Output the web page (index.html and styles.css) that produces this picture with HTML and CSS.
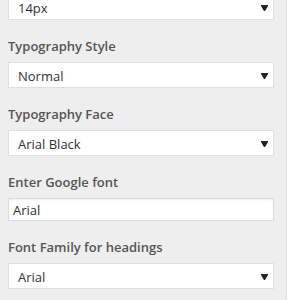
FILE: index.html
```html
<!DOCTYPE html>
<html lang="en">

<head>
    <meta charset="UTF-8">
    <meta name="viewport" content="width=device-width, initial-scale=1.0">
    <title>Typography options</title>
    <link rel="stylesheet" href="styles.css">
</head>

<body>
    <div class="page">
        <div class="panel">
            <div class="field first">
                <div class="select">
                    <span>14px</span>
                    <svg class="arrow" width="7" height="6" viewBox="0 0 7 6"><polygon points="0,0 7,0 7,1 4,6 3,6 0,1" /></svg>
                </div>
            </div>
            <div class="field">
                <div class="label">Typography Style</div>
                <div class="select">
                    <span>Normal</span>
                    <svg class="arrow" width="7" height="6" viewBox="0 0 7 6"><polygon points="0,0 7,0 7,1 4,6 3,6 0,1" /></svg>
                </div>
            </div>
            <div class="field">
                <div class="label">Typography Face</div>
                <div class="select">
                    <span>Arial Black</span>
                    <svg class="arrow" width="7" height="6" viewBox="0 0 7 6"><polygon points="0,0 7,0 7,1 4,6 3,6 0,1" /></svg>
                </div>
            </div>
            <div class="field">
                <div class="label">Enter Google font</div>
                <input type="text" class="text-input" value="Arial" />
            </div>
            <div class="field">
                <div class="label">Font Family for headings</div>
                <div class="select">
                    <span>Arial</span>
                    <svg class="arrow" width="7" height="6" viewBox="0 0 7 6"><polygon points="0,0 7,0 7,1 4,6 3,6 0,1" /></svg>
                </div>
            </div>
        </div>
        <div class="gutter"></div>
    </div>
</body>

</html>
```

FILE: styles.css
```css
* {
    box-sizing: border-box;
}

body {
    margin: 0;
    background-color: white;
    font-family: "Open Sans", "Noto Sans", sans-serif;
    color: #444;
    overflow: hidden;
}

.page {
    display: flex;
    height: 300px;
}

.panel {
    width: 287px;
    background-color: #eeeeee;
    border-right: 1px solid #e2e2e2;
    padding: 0 12px 0 8px;
}

.field {
    display: flex;
    flex-direction: column;
}

.field.first {
    margin-top: -6px;
}

.label {
    font-size: 13px;
    font-weight: 600;
    color: #555;
    line-height: 18px;
    margin-top: 17px;
    margin-bottom: 7px;
}

.select {
    display: flex;
    align-items: center;
    justify-content: space-between;
    height: 26px;
    background-color: white;
    border: 1px solid #e0e0e0;
    padding: 1px 5px 0 9px;
    font-size: 13px;
    color: #333;
}

.arrow {
    fill: #222;
}

.text-input {
    height: 23px;
    width: 100%;
    border: 1px solid #dcdcdc;
    box-shadow: inset 0 1px 2px rgba(0, 0, 0, 0.07);
    padding: 0 4px;
    font-family: "Open Sans", "Noto Sans", sans-serif;
    font-size: 13px;
    color: #333;
    outline: none;
}

.gutter {
    flex: 1;
    background-color: white;
}
```
